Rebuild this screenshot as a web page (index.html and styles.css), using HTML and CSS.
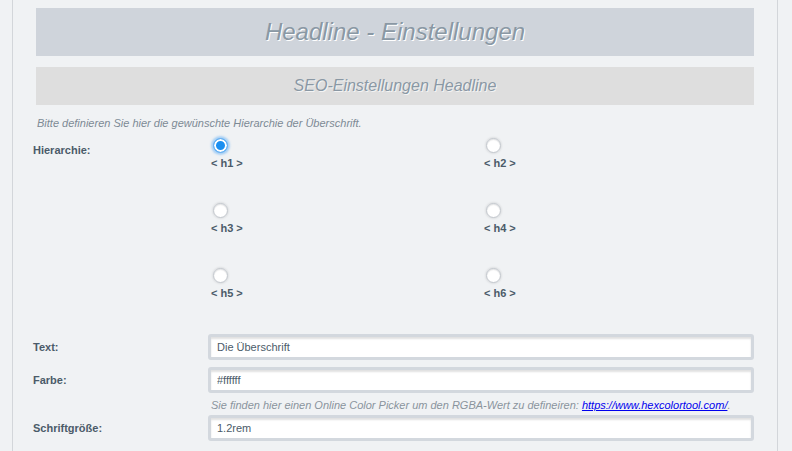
FILE: index.html
```html
<!DOCTYPE html>
<html lang="de">
<head>
<meta charset="utf-8">
<title>Headline - Einstellungen</title>
<link rel="stylesheet" href="styles.css">
</head>
<body>
<div class="frame">
  <div class="content">
    <h1 class="title">Headline - Einstellungen</h1>
    <h2 class="subtitle">SEO-Einstellungen Headline</h2>
    <p class="hint">Bitte definieren Sie hier die gewünschte Hierarchie der Überschrift.</p>
    <div class="form">
      <div class="row">
        <div class="label label-top">Hierarchie:</div>
        <div class="radios">
          <label class="radio"><input type="radio" name="h" checked><span>&lt; h1 &gt;</span></label>
          <label class="radio"><input type="radio" name="h"><span>&lt; h2 &gt;</span></label>
          <label class="radio"><input type="radio" name="h"><span>&lt; h3 &gt;</span></label>
          <label class="radio"><input type="radio" name="h"><span>&lt; h4 &gt;</span></label>
          <label class="radio"><input type="radio" name="h"><span>&lt; h5 &gt;</span></label>
          <label class="radio"><input type="radio" name="h"><span>&lt; h6 &gt;</span></label>
        </div>
      </div>
      <div class="row row-field row-first">
        <div class="label">Text:</div>
        <input class="input" type="text" value="Die Überschrift">
      </div>
      <div class="row row-field row-tight">
        <div class="label">Farbe:</div>
        <input class="input" type="text" value="#ffffff">
      </div>
      <div class="row">
        <div></div>
        <p class="fieldhint">Sie finden hier einen Online Color Picker um den RGBA-Wert zu defineiren: <a href="#">https://www.hexcolortool.com/</a>.</p>
      </div>
      <div class="row row-field">
        <div class="label">Schriftgröße:</div>
        <input class="input" type="text" value="1.2rem">
      </div>
    </div>
  </div>
</div>
</body>
</html>
```
FILE: styles.css
```css
html, body {
  margin: 0;
  padding: 0;
  background: #f0f2f4;
  font-family: "Liberation Sans", Arial, sans-serif;
  height: 100%;
  overflow: hidden;
}
.frame {
  margin-left: 12px;
  width: 766px;
  min-height: 100%;
  border-left: 1px solid #d3d6da;
  border-right: 1px solid #d3d6da;
  box-sizing: border-box;
}
.content {
  padding: 8px 23px 0 23px;
}
.title {
  margin: 0;
  height: 48px;
  background: #cfd4db;
  color: #8a98a4;
  font-size: 24px;
  font-weight: normal;
  font-style: italic;
  text-align: center;
  line-height: 48px;
  text-shadow: 1px 1px 0 #ffffff;
}
.subtitle {
  margin: 11px 0 0;
  height: 38px;
  background: #dedede;
  color: #8a98a4;
  font-size: 16px;
  font-weight: normal;
  font-style: italic;
  text-align: center;
  line-height: 38px;
  text-shadow: 1px 1px 0 #f4f4f4;
}
.hint {
  margin: 12px 0 0 1px;
  font-size: 11px;
  font-style: italic;
  color: #7d8a95;
  line-height: 13px;
}
.form {
  margin-left: -3px;
}
.row {
  display: grid;
  grid-template-columns: 175px 1fr;
  align-items: center;
}
.label {
  font-size: 11px;
  font-weight: bold;
  color: #4b5b69;
}
.label-top {
  align-self: start;
  margin-top: 14px;
}
.radios {
  display: grid;
  grid-template-columns: 273px 1fr;
  margin-top: 8px;
  padding-left: 3px;
}
.radio {
  display: flex;
  flex-direction: column;
  align-items: flex-start;
  height: 65px;
}
.radio input {
  -webkit-appearance: none;
  appearance: none;
  margin: 0 0 0 2px;
  width: 15px;
  height: 15px;
  border-radius: 50%;
  background: #ffffff;
  border: 1px solid #c3c8ce;
  box-shadow: 0 0 2px 1px rgba(0, 0, 0, 0.08), inset 0 1px 1px rgba(0, 0, 0, 0.1);
  box-sizing: border-box;
}
.radio input:checked {
  background: #1b8ff0;
  border: 1px solid #6db3f2;
  box-shadow: inset 0 0 0 2px #ffffff, 0 0 2px 2px rgba(110, 180, 245, 0.55);
}
.radio span {
  margin-top: 4px;
  font-size: 11px;
  font-weight: bold;
  color: #4b5b69;
  line-height: 13px;
}
.row-field {
  margin-bottom: 7px;
}
.row-first {
  margin-top: 1px;
}
.row-tight {
  margin-bottom: 0;
}
.input {
  display: block;
  width: 100%;
  height: 26px;
  margin: 0;
  box-sizing: border-box;
  border: 3px solid #d3d8de;
  border-radius: 3px;
  background: #ffffff;
  box-shadow: inset 0 2px 2px rgba(0, 0, 0, 0.12);
  padding: 0 6px;
  font-family: "Liberation Sans", Arial, sans-serif;
  font-size: 11px;
  color: #4b5b69;
  outline: none;
}
.fieldhint {
  margin: 6px 0 3px 3px;
  font-size: 11px;
  font-style: italic;
  color: #8a949d;
  line-height: 13px;
}
.fieldhint a {
  color: #0000ee;
  text-decoration: underline;
}
```
